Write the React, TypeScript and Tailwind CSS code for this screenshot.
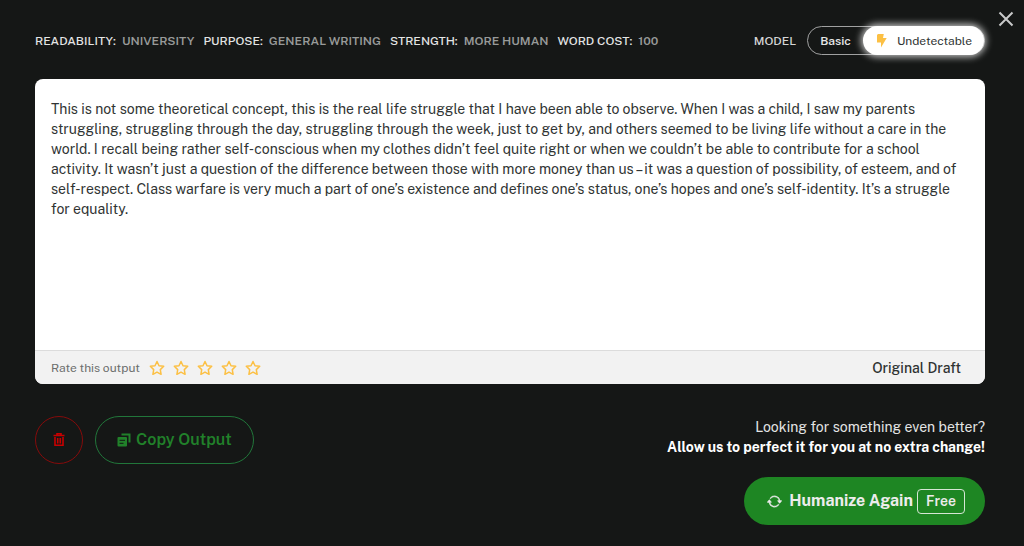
import React, { useState } from "react";
import { BsArrowRepeat } from "react-icons/bs";

const details = [
  { label: "READABILITY:", value: "UNIVERSITY" },
  { label: "PURPOSE:", value: "GENERAL WRITING" },
  { label: "STRENGTH:", value: "MORE HUMAN" },
  { label: "WORD COST:", value: "100" },
];

const output = `This is not some theoretical concept, this is the real life struggle that I have been able to observe. When I was a child, I saw my parents
struggling, struggling through the day, struggling through the week, just to get by, and others seemed to be living life without a care in the
world. I recall being rather self-conscious when my clothes didn’t feel quite right or when we couldn’t be able to contribute for a school
activity. It wasn’t just a question of the difference between those with more money than us – it was a question of possibility, of esteem, and of
self-respect. Class warfare is very much a part of one’s existence and defines one’s status, one’s hopes and one’s self-identity. It’s a struggle
for equality.`;

const App = () => {
  const [model, setModel] = useState<string>("undetectable");
  const [rating, setRating] = useState<number>(0);

  return (
    <div className="relative min-h-screen bg-[#151716] pt-[26px] pr-[39px] pb-5 pl-[35px] font-['Public_Sans',Inter,sans-serif] text-white">
      <button
        aria-label="Close"
        className="absolute top-[11px] right-[10px] text-[#c8c9c9]"
      >
        <svg width="16" height="16" viewBox="0 0 16 16" fill="none">
          <path d="M1.5 1.5l13 13M14.5 1.5l-13 13" stroke="currentColor" strokeWidth="2" />
        </svg>
      </button>

      <header className="flex items-center justify-between">
        <dl className="flex gap-[9px] text-xs whitespace-nowrap">
          {details.map((detail) => (
            <div key={detail.label} className="flex gap-[6px]">
              <dt className="font-medium text-[#e4e5e5]">{detail.label}</dt>
              <dd className="font-semibold text-[#989a99]">{detail.value}</dd>
            </div>
          ))}
        </dl>
        <ModelSwitch model={model} setModel={setModel} />
      </header>

      <main className="mt-6 overflow-hidden rounded-lg bg-white">
        <p className="min-h-[271px] px-4 pt-5 text-sm leading-[20px] whitespace-pre-line text-[#303433]">
          {output}
        </p>
        <div className="flex h-[34px] items-center justify-between border-t border-[#dcdcdc] bg-[#f2f2f2] pr-6 pl-4">
          <div className="flex items-center gap-[9px]">
            <span className="text-xs text-[#6c6e6d]">Rate this output</span>
            <div className="flex gap-2">
              {[1, 2, 3, 4, 5].map((star) => (
                <button
                  key={star}
                  aria-label={`Rate ${star} out of 5`}
                  onClick={() => setRating(star)}
                >
                  <StarIcon filled={star <= rating} />
                </button>
              ))}
            </div>
          </div>
          <span className="text-sm font-medium text-[#303433]">Original Draft</span>
        </div>
      </main>

      <footer className="mt-8 flex items-start justify-between">
        <div className="flex gap-3">
          <button
            aria-label="Delete output"
            className="flex size-12 items-center justify-center rounded-full border border-[#850b0b] text-[#c80000]"
          >
            <TrashIcon />
          </button>
          <button className="flex h-12 items-center gap-[5px] rounded-full border border-[#21763a] px-[21px] text-base font-semibold text-[#21812a]">
            <CopyIcon />
            Copy Output
          </button>
        </div>
        <div className="flex flex-col items-end">
          <p className="pt-px text-right text-sm leading-[20px] text-[#e4e5e5]">
            Looking for something even better?
            <br />
            <strong className="font-bold text-white">
              Allow us to perfect it for you at no extra change!
            </strong>
          </p>
          <button className="mt-5 flex h-12 items-center rounded-full bg-[#1e8623] px-5 text-base font-bold text-[#ececec]">
            <span className="mr-[7px] ml-[3px]">
              <BsArrowRepeat size={15} strokeWidth={0.5} />
            </span>
            Humanize Again
            <span className="ml-1 rounded border border-[#d5e6d5] px-2 text-sm leading-[23px] font-semibold">
              Free
            </span>
          </button>
        </div>
      </footer>
    </div>
  );
};

export default App;

const ModelSwitch = ({
  model,
  setModel,
}: {
  model: string;
  setModel: (model: string) => void;
}) => {
  return (
    <div className="flex items-center gap-[11px] text-xs">
      <span className="font-medium text-[#d5d6d6]">MODEL</span>
      <div className="flex h-[29px] items-center rounded-full border border-[#a0a1a1]">
        {["basic", "undetectable"].map((name) => (
          <button
            key={name}
            onClick={() => setModel(name)}
            className={`flex h-[29px] items-center gap-2 rounded-full px-3 ${
              model === name
                ? "bg-white text-[#303433] shadow-[0_0_7px_2px_rgba(255,255,255,0.75)]"
                : "font-semibold text-[#e4e5e5]"
            }`}
          >
            {name === "undetectable" && <BoltIcon />}
            {name === "basic" ? "Basic" : "Undetectable"}
          </button>
        ))}
      </div>
    </div>
  );
};

const BoltIcon = () => (
  <svg width="14" height="14" viewBox="0 0 14 14" fill="#fcc044">
    <path d="M3 0h5.8L8 4h3.7L6 13.5V8.5H2V1z" />
  </svg>
);

const StarIcon = ({ filled }: { filled: boolean }) => (
  <svg width="16" height="16" viewBox="0 0 16 16" fill={filled ? "#fcc044" : "none"}>
    <path
      d="M8 1.5l2 4.2 4.7.6-3.4 3.3.8 4.7L8 12.1l-4.1 2.2.8-4.7-3.4-3.3 4.7-.6z"
      stroke="#fcc044"
      strokeWidth="1.5"
      strokeLinejoin="round"
    />
  </svg>
);

const TrashIcon = () => (
  <svg width="12" height="14" viewBox="0 0 12 14" fill="none">
    <path
      d="M.5 2.5h11M4 2V.8h4V2M2 4v8.2h8V4M4.7 5v5.5M7.3 5v5.5"
      stroke="currentColor"
      strokeWidth="1.6"
    />
  </svg>
);

const CopyIcon = () => (
  <svg width="14" height="14" viewBox="0 0 14 14" fill="none">
    <path d="M4.5 1.5h8v8" stroke="currentColor" strokeWidth="2" />
    <rect x=".5" y="4" width="9.5" height="9.5" rx="1" fill="currentColor" />
    <path d="M2.5 7.3h5.5M2.5 10.3h4" stroke="#151716" strokeWidth="1" />
  </svg>
);
